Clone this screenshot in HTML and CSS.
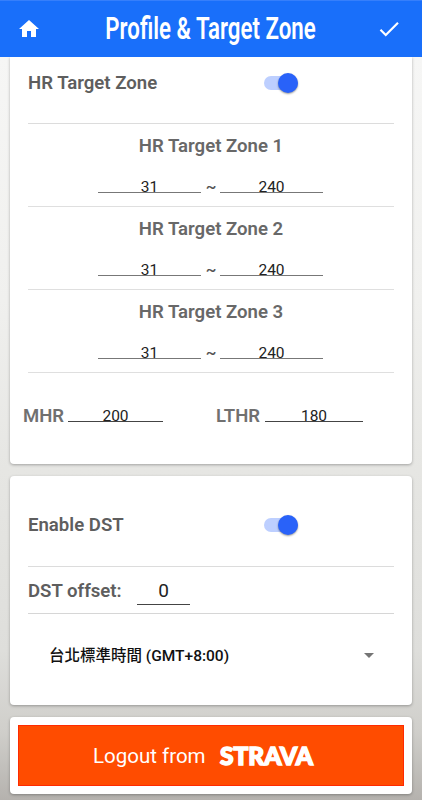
FILE: index.html
```html
<!DOCTYPE html>
<html lang="zh-Hant">
<head>
    <meta charset="UTF-8">
    <meta name="viewport" content="width=device-width, initial-scale=1.0">
    <title>Profile &amp; Target Zone</title>
    <link rel="stylesheet" href="styles.css">
</head>
<body>
    <header class="app-bar">
        <svg class="home-icon" viewBox="0 0 24 24"><path d="M10 20v-6h4v6h5v-8h3L12 3 2 12h3v8z"/></svg>
        <h1 class="title"><span>Profile &amp; Target Zone</span></h1>
        <svg class="check-icon" viewBox="0 0 24 24"><path d="M9 16.17 4.83 12l-1.42 1.41L9 19 21 7l-1.41-1.41z"/></svg>
    </header>
    <main>
        <section class="card zones">
            <div class="switch-row">
                <span class="label">HR Target Zone</span>
                <span class="switch"></span>
            </div>
            <div class="zone">
                <h2>HR Target Zone 1</h2>
                <div class="range">
                    <span class="field">31</span>
                    <span class="tilde">~</span>
                    <span class="field">240</span>
                </div>
            </div>
            <div class="zone">
                <h2>HR Target Zone 2</h2>
                <div class="range">
                    <span class="field">31</span>
                    <span class="tilde">~</span>
                    <span class="field">240</span>
                </div>
            </div>
            <div class="zone">
                <h2>HR Target Zone 3</h2>
                <div class="range">
                    <span class="field">31</span>
                    <span class="tilde">~</span>
                    <span class="field">240</span>
                </div>
            </div>
            <div class="rates">
                <div class="rate mhr">
                    <span class="rate-name">MHR</span>
                    <span class="field">200</span>
                </div>
                <div class="rate lthr">
                    <span class="rate-name">LTHR</span>
                    <span class="field">180</span>
                </div>
            </div>
        </section>
        <section class="card dst">
            <div class="switch-row">
                <span class="label">Enable DST</span>
                <span class="switch"></span>
            </div>
            <div class="offset-row">
                <span class="label">DST offset:</span>
                <span class="field">0</span>
            </div>
            <div class="timezone">
                <span>台北標準時間 (GMT+8:00)</span>
                <span class="arrow"></span>
            </div>
        </section>
        <section class="card account">
            <button class="logout">
                <span class="logout-text">Logout from</span>
                <svg class="strava" viewBox="0 0 104 40"><text x="5" y="29" textLength="93" lengthAdjust="spacingAndGlyphs">STRAVA</text></svg>
            </button>
        </section>
    </main>
</body>
</html>
```

FILE: styles.css
```css
* {
    box-sizing: border-box;
}
body {
    margin: 0;
    height: 800px;
    overflow: hidden;
    font-family: Roboto, "Noto Sans CJK TC", sans-serif;
    background: linear-gradient(#f6f6f5 57px, #f0f0ee 300px, #e6e6e3 470px, #dededb 650px, #d0cfcb 730px, #b5b2ae 800px);
}
.app-bar {
    display: flex;
    align-items: center;
    justify-content: space-between;
    height: 57px;
    padding: 0 20px 0 17px;
    background: #196ffa;
    border-top: 1px solid #367ffb;
}
.app-bar svg {
    fill: #fff;
    flex: none;
}
.home-icon {
    width: 24px;
    height: 24px;
}
.title {
    display: flex;
    justify-content: center;
    width: 330px;
    margin: 0;
    padding-left: 5px;
    font-size: 31px;
    line-height: 50px;
    font-weight: 600;
    white-space: nowrap;
    color: #fff;
}
.title span {
    transform: scaleX(0.718);
}
.check-icon {
    width: 26px;
    height: 26px;
}
main {
    display: flex;
    flex-direction: column;
    gap: 12px;
    padding: 0 10px;
}
.card {
    background: #fff;
    border-radius: 4px;
    box-shadow: 0 1px 3px rgba(0, 0, 0, 0.3);
}
.zones {
    height: 407px;
    padding: 0 18px;
    border-radius: 0 0 4px 4px;
    clip-path: inset(0 -5px -5px -5px);
}
.switch-row {
    display: flex;
    align-items: center;
    height: 67px;
    padding-bottom: 15px;
    border-bottom: 1px solid #dcdcdc;
}
.label {
    width: 236px;
    font-size: 18.6px;
    font-weight: 600;
    color: #5e5e5e;
}
.switch {
    display: flex;
    align-items: center;
    justify-content: flex-end;
    width: 34px;
    height: 14px;
    border-radius: 7px;
    background: #bdcfff;
}
.switch::after {
    content: "";
    flex: none;
    width: 20px;
    height: 20px;
    border-radius: 50%;
    background: #2962f9;
    box-shadow: 0 1px 2px rgba(0, 0, 0, 0.4);
}
.zone {
    height: 83px;
    padding-top: 10px;
    border-bottom: 1px solid #dfdfdf;
}
.zone h2 {
    margin: 0;
    font-size: 18.6px;
    line-height: 24px;
    font-weight: 600;
    text-align: center;
    color: #686868;
}
.range {
    display: flex;
    margin: 18px 0 0 70px;
    height: 17px;
}
.field {
    height: 17px;
    width: 103px;
    border-bottom: 1px solid #777;
    font-size: 15.5px;
    line-height: 22px;
    font-weight: 400;
    text-align: center;
    color: #222;
}
.tilde {
    width: 19px;
    padding-left: 1px;
    font-size: 16px;
    line-height: 22px;
    font-weight: 500;
    text-align: center;
    color: #555;
}
.rates {
    display: flex;
    margin: 31px 0 0 -5px;
}
.rate {
    display: flex;
    align-items: flex-start;
    flex: none;
    width: 193px;
}
.rate-name {
    width: 45px;
    font-size: 18.5px;
    line-height: 24px;
    font-weight: 600;
    color: #707070;
}
.rate .field {
    width: 95px;
    height: 18px;
    line-height: 24px;
    border-color: #444;
}
.lthr .rate-name {
    width: 49px;
}
.lthr .field {
    width: 98px;
}
.dst {
    height: 229px;
    padding: 0 18px;
}
.dst .switch-row {
    height: 91px;
    padding: 8px 0 0;
}
.offset-row {
    display: flex;
    height: 47px;
    border-bottom: 1px solid #d6d6d6;
}
.offset-row .label {
    width: 109px;
    line-height: 48px;
}
.offset-row .field {
    width: 53px;
    height: 38px;
    font-size: 19px;
    line-height: 47px;
    border-color: #444;
}
.timezone {
    display: flex;
    align-items: center;
    justify-content: space-between;
    height: 83px;
    padding: 0 20px 1px 21px;
    font-size: 15.5px;
    font-weight: 500;
    color: #111;
}
.timezone span:first-child {
    padding-bottom: 2px;
}
.arrow {
    border: 5px solid transparent;
    border-top-color: #757575;
    border-bottom: 0;
}
.account {
    height: 77px;
    padding: 8px;
}
.logout {
    display: flex;
    align-items: center;
    width: 100%;
    height: 61px;
    padding: 0 0 0 74px;
    border: 1px solid #ff2a00;
    background: #ff4c00;
    color: #fff;
    font-family: Roboto, sans-serif;
    font-size: 20.5px;
    font-weight: 450;
}
.logout-text {
    width: 122px;
    text-align: left;
    white-space: nowrap;
}
.strava {
    width: 104px;
    height: 40px;
    fill: #fff;
}
.strava text {
    font-family: Lato, sans-serif;
    font-size: 24px;
    font-weight: 900;
    stroke: #fff;
    stroke-width: 1.5px;
}
```
